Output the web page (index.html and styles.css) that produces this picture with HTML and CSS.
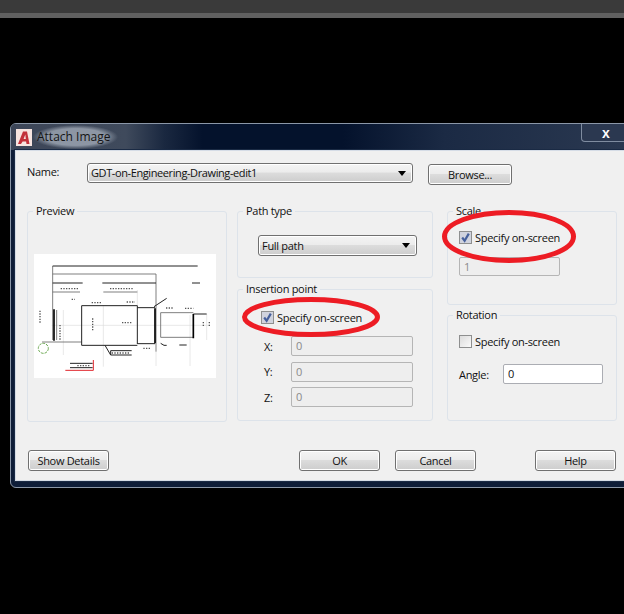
FILE: index.html
```html
<!DOCTYPE html>
<html lang="en">
<head>
<meta charset="utf-8">
<title>Attach Image</title>
<link rel="stylesheet" href="styles.css">
</head>
<body>
<div class="topbar"></div>
<div class="topstrip"></div>
<main class="dialog">
  <header class="titlebar">
    <svg class="appicon" viewBox="0 0 16 17"><rect width="16" height="17" fill="#f6e4e0"/><path d="M2 15 7 2.500h4L13.500 15h-3l-.4-2.600H6.600L5 15zM7.600 10h2.200l-.5-4.400z" fill="#c2303a"/></svg>
    <span class="title">Attach Image</span>
    <button class="close" type="button">x</button>
  </header>
  <div class="client">
    <div class="namerow">
      <label class="namelabel">Name:</label>
      <div class="combo combo-name">GDT-on-Engineering-Drawing-edit1<i class="arrow"></i></div>
      <button class="btn btn-browse" type="button">Browse...</button>
    </div>
    <div class="groups">
      <fieldset class="group group-preview">
        <legend>Preview</legend>
        <svg class="drawing" viewBox="42 42 546 372">
          <rect x="42" y="42" width="546" height="372" fill="#fff"/>
          <g fill="none" stroke="#dcdcdc" stroke-width="2">
            <path d="M95 256H570M250 197V380M510 225V378M130 210V345M352 150V197M560 222V300M408 335V378"/>
          </g>
          <g fill="none" stroke="#666" stroke-width="2.500">
            <path d="M98 78V300M98 102H408V335M110 210V300M66 306H185M422 218V292H520M422 218H520M98 156H180M250 156H352"/>
          </g>
          <g fill="none" stroke="#222" stroke-width="3">
            <path d="M98 78H533M98 129H188M247 129H408M185 197V316M185 197H352V312M185 316H352M352 203H405M352 311H405M520 222H560M516 129H540M422 310 432 316H440M255 316 272 345H335M272 332H335M272 332V345M150 370H218M150 383H218M478 315H500M402 200 440 175"/>
          </g>
          <path d="M102 208V302M405 205V310M520 222V295" fill="none" stroke="#000" stroke-width="5"/>
          <g fill="none" stroke="#555" stroke-width="4" stroke-dasharray="4 4">
            <path d="M122 146H175M270 146H340M60 212V252M120 255V300M218 235V275M320 186H345M438 204H460M495 205H520M550 246V262M568 246V262M275 339H330M172 377H212M370 325H390M306 248H335M155 178H165M215 188H245"/>
          </g>
          <circle cx="70" cy="325" r="15" fill="none" stroke="#6aa84f" stroke-width="3" stroke-dasharray="8 3"/>
          <path d="M136 391H220V360" fill="none" stroke="#e0262c" stroke-width="3"/>
        </svg>
      </fieldset>
      <div class="column column-mid">
        <fieldset class="group group-path">
          <legend>Path type</legend>
          <div class="combo combo-path">Full path<i class="arrow"></i></div>
        </fieldset>
        <fieldset class="group group-insert">
          <legend>Insertion point</legend>
          <label class="check"><i class="box box-on"><svg viewBox="0 0 10 10"><path d="M2 5l2.200 3L8 1.500" fill="none" stroke="#46609c" stroke-width="2"/></svg></i>Specify on-screen</label>
          <div class="coord"><span class="coordlabel">X:</span><span class="field field-coord">0</span></div>
          <div class="coord"><span class="coordlabel">Y:</span><span class="field field-coord">0</span></div>
          <div class="coord"><span class="coordlabel">Z:</span><span class="field field-coord">0</span></div>
        </fieldset>
      </div>
      <div class="column column-right">
        <fieldset class="group group-scale">
          <legend>Scale</legend>
          <label class="check"><i class="box box-on"><svg viewBox="0 0 10 10"><path d="M2 5l2.200 3L8 1.500" fill="none" stroke="#46609c" stroke-width="2"/></svg></i>Specify on-screen</label>
          <span class="field field-scale">1</span>
        </fieldset>
        <fieldset class="group group-rotation">
          <legend>Rotation</legend>
          <label class="check"><i class="box"></i>Specify on-screen</label>
          <div class="anglerow"><span class="anglelabel">Angle:</span><span class="field field-angle">0</span></div>
        </fieldset>
      </div>
    </div>
    <footer class="footer">
      <button class="btn" type="button">Show Details</button>
      <button class="btn btn-ok" type="button">OK</button>
      <button class="btn btn-cancel" type="button">Cancel</button>
      <button class="btn btn-help" type="button">Help</button>
    </footer>
  </div>
  <svg class="marks" viewBox="0 0 624 365">
    <ellipse cx="311" cy="194" rx="66.500" ry="17.500" fill="none" stroke="#ed1c24" stroke-width="5"/>
    <ellipse cx="509" cy="113.500" rx="64.500" ry="24" fill="none" stroke="#ed1c24" stroke-width="5"/>
  </svg>
</main>
</body>
</html>
```

FILE: styles.css
```css
html, body {
  margin: 0;
  height: 614px;
  overflow: hidden;
  background: #000;
  font-family: "Open Sans", "Noto Sans", sans-serif;
  font-size: 11px;
  letter-spacing: -0.3px;
  color: #111;
}
.topbar { height: 13px; background: #3a3a3a; }
.topstrip { height: 5px; background: #606060; }
.dialog {
  position: relative;
  box-sizing: border-box;
  width: 640px;
  height: 365px;
  margin: 105px 0 0 10px;
  background: #0e1d38;
  border: 1px solid #8b97a8;
  border-radius: 6px 0 0 6px;
}
.marks {
  position: absolute;
  left: -11px;
  top: -1px;
  width: 624px;
  height: 365px;
  pointer-events: none;
}
.titlebar {
  display: flex;
  align-items: center;
  height: 26px;
  padding: 0 0 0 5px;
  background: linear-gradient(90deg, #3d4658 0, #3f4a5c 18%, #1a2840 24%, #04122c 30%, #04122c 52%, #1b2a44 68%, #2c3a52 100%);
  border-radius: 5px 0 0 0;
}
.appicon { width: 16px; height: 17px; flex: none; }
.title {
  margin-left: 1px;
  padding: 0 8px 0 4px;
  font-size: 12px;
  line-height: 24px;
  letter-spacing: 0;
  color: #141414;
  background: radial-gradient(closest-side, #8d96a4 70%, rgba(141, 150, 164, 0) 100%);
}
.close {
  appearance: none;
  width: 68px;
  height: 18px;
  margin: -8px 0 0 auto;
  padding: 0 18px 0 0;
  border: 1px solid #7f8ca0;
  border-top: 0;
  border-radius: 0 0 4px 4px;
  background: #2b3850;
  color: #fff;
  font: bold 14px/14px "Liberation Sans", sans-serif;
}
.client {
  box-sizing: border-box;
  width: 620px;
  height: 331px;
  margin-left: 4px;
  padding: 0 0 0 11px;
  background: #f0f0f0;
  border: 1px solid #d5dce6;
  box-shadow: 0 0 0 1px #1a2a44;
}
.namerow {
  display: flex;
  align-items: flex-start;
  height: 52px;
  padding-top: 12px;
  box-sizing: border-box;
}
.namelabel { width: 60px; line-height: 18px; }
.combo {
  position: relative;
  box-sizing: border-box;
  padding-left: 3px;
  border: 1px solid #707070;
  border-radius: 3px;
  background: linear-gradient(#f4f4f4 0, #ececec 45%, #dcdcdc 50%, #cdcdcd 100%);
  box-shadow: inset 0 0 0 1px #fff;
}
.combo-name { width: 326px; height: 20px; line-height: 17px; letter-spacing: -0.4px; }
.combo-path { width: 159px; height: 21px; margin: 16px 0 0 20px; line-height: 19px; }
.arrow {
  position: absolute;
  right: 6px;
  top: 7px;
  border: 4px solid transparent;
  border-top: 5px solid #000;
  border-bottom: 0;
}
.btn {
  appearance: none;
  box-sizing: border-box;
  width: 81px;
  height: 21px;
  padding: 0;
  border: 1px solid #707070;
  border-radius: 3px;
  background: linear-gradient(#f4f4f4 0, #ececec 45%, #dcdcdc 50%, #cdcdcd 100%);
  box-shadow: inset 0 0 0 1px #fff;
  color: #111;
  font: inherit;
  letter-spacing: inherit;
}
.btn-browse { width: 84px; margin: 1px 0 0 15px; }
.groups { display: flex; align-items: flex-start; height: 247px; }
.column { display: flex; flex-direction: column; }
.column-mid { width: 196px; margin-left: 10px; }
.column-right { width: 170px; margin-left: 14px; }
.group {
  box-sizing: border-box;
  min-width: 0;
  margin: 0;
  padding: 0;
  border: 1px solid #dde3ea;
  border-radius: 3px;
}
.group legend {
  margin-left: 5px;
  padding: 0 3px;
  line-height: 16px;
}
.group-preview { width: 200px; height: 219px; }
.group-path { height: 75px; }
.group-insert { height: 140px; margin-top: 3px; }
.group-scale { height: 102px; }
.group-rotation { height: 114px; margin-top: 2px; }
.drawing {
  display: block;
  width: 182px;
  height: 124px;
  margin: 35px 0 0 6px;
}
.check { display: flex; align-items: center; height: 14px; }
.group-insert .check { margin: 13px 0 0 23px; }
.group-scale .check { margin: 11px 0 0 11px; }
.group-rotation .check { margin: 11px 0 0 11px; }
.box {
  box-sizing: border-box;
  width: 13px;
  height: 13px;
  margin-right: 3px;
  flex: none;
  border: 1px solid #8e8f8f;
  background: linear-gradient(135deg, #dcdcdc, #fafafa);
}
.box-on { background: #d0d3de; }
.box svg { display: block; width: 11px; height: 11px; }
.coord { display: flex; align-items: center; height: 20px; margin-top: 5.5px; }
.group-insert .check + .coord { margin-top: 12px; }
.coordlabel { width: 27px; margin-left: 26px; }
.field {
  display: block;
  box-sizing: border-box;
  padding-left: 4px;
  border: 1px solid #b5b5b5;
  border-radius: 2px;
  background: #eeeeee;
  color: #8a8a8a;
  line-height: 17px;
  height: 20px;
}
.field-coord { width: 122px; }
.field-scale { width: 101px; height: 19px; margin: 13px 0 0 11px; }
.anglerow { display: flex; align-items: center; margin: 16px 0 0 11px; }
.anglelabel { width: 44px; }
.field-angle {
  width: 100px;
  border-color: #abadb3;
  background: #fff;
  color: #111;
}
.footer {
  display: flex;
  padding-left: 1px;
}
.btn-ok { margin-left: 190px; }
.btn-cancel { margin-left: 15px; }
.btn-help { margin-left: 59px; }
```
